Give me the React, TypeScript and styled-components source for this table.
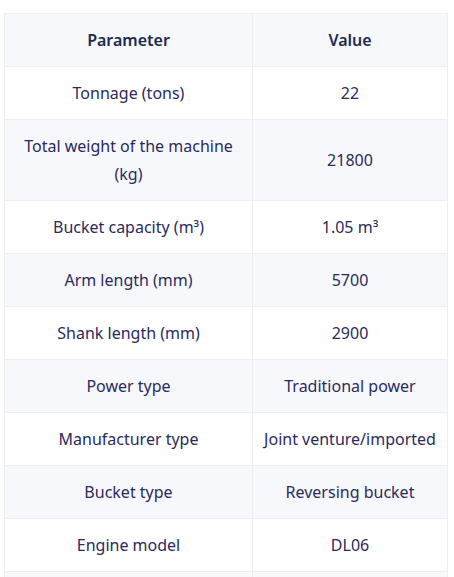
import React from "react";
import styled, { createGlobalStyle } from "styled-components";

const Global = createGlobalStyle`
  html, body { margin: 0; padding: 0; background: #ffffff; }
  body { font-family: "Noto Sans", "Open Sans", Arial, sans-serif; }
  *, *::before, *::after { box-sizing: border-box; }
`;

const Wrapper = styled.div`
  padding: 13px 0 0 4px;
`;

const Table = styled.table`
  width: 444px;
  border-collapse: collapse;
  table-layout: fixed;
  font-size: 16px;
  line-height: 28px;
`;

const HeadCell = styled.th<{ $w?: number }>`
  width: ${(p) => (p.$w ? `${p.$w}px` : "auto")};
  background: #f7f8fc;
  color: #1b2b4f;
  font-weight: 600;
  text-align: center;
  padding: 12px 10px;
  border: 1px solid #eceef2;
`;

const Row = styled.tr<{ $alt: boolean }>`
  background: ${(p) => (p.$alt ? "#f7f8fc" : "#ffffff")};
`;

const Cell = styled.td`
  color: #2b2a5c;
  text-align: center;
  padding: 12px 10px;
  border: 1px solid #eceef2;
  font-weight: 400;
`;

const rows: [React.ReactNode, React.ReactNode][] = [
  ["Tonnage (tons)", "22"],
  ["Total weight of the machine (kg)", "21800"],
  ["Bucket capacity (m³)", "1.05 m³"],
  ["Arm length (mm)", "5700"],
  ["Shank length (mm)", "2900"],
  ["Power type", "Traditional power"],
  ["Manufacturer type", "Joint venture/imported"],
  ["Bucket type", "Reversing bucket"],
  ["Engine model", "DL06"],
  ["Engine power (kW)", "118"],
];

export default function App() {
  return (
    <>
      <Global />
      <Wrapper>
        <Table>
          <thead>
            <tr>
              <HeadCell $w={248}>Parameter</HeadCell>
              <HeadCell>Value</HeadCell>
            </tr>
          </thead>
          <tbody>
            {rows.map(([k, v], i) => (
              <Row key={i} $alt={i % 2 === 1}>
                <Cell>{k}</Cell>
                <Cell>{v}</Cell>
              </Row>
            ))}
          </tbody>
        </Table>
      </Wrapper>
    </>
  );
}
